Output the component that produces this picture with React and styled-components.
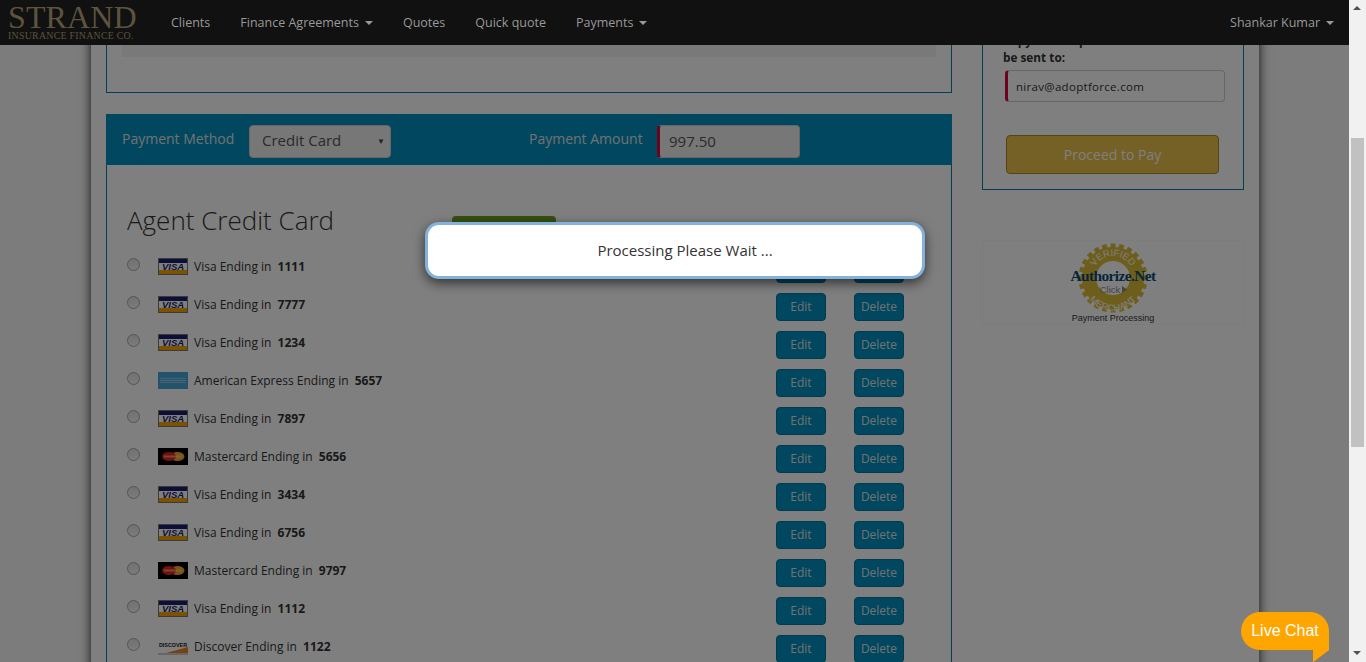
import styled, { createGlobalStyle } from 'styled-components'

const GlobalStyle = createGlobalStyle`
    html, body {
        margin: 0;
        height: 100%;
        overflow: hidden;
        background: #f8f8f8;
    }
    * {
        box-sizing: border-box;
    }
`

const cards = [
    { type: 'visa', name: 'Visa', last: '1111' },
    { type: 'visa', name: 'Visa', last: '7777' },
    { type: 'visa', name: 'Visa', last: '1234' },
    { type: 'amex', name: 'American Express', last: '5657' },
    { type: 'visa', name: 'Visa', last: '7897' },
    { type: 'master', name: 'Mastercard', last: '5656' },
    { type: 'visa', name: 'Visa', last: '3434' },
    { type: 'visa', name: 'Visa', last: '6756' },
    { type: 'master', name: 'Mastercard', last: '9797' },
    { type: 'visa', name: 'Visa', last: '1112' },
    { type: 'discover', name: 'Discover', last: '1122' },
]

const Caret = styled.span`
    display: inline-block;
    width: 0;
    height: 0;
    margin-left: 6px;
    vertical-align: middle;
    border-top: 4px solid currentColor;
    border-left: 4px solid transparent;
    border-right: 4px solid transparent;
`

const CardIcon = ({ type }) => {
    if (type === 'visa') {
        return (
            <svg width="30" height="17" viewBox="0 0 30 17">
                <rect width="30" height="17" fill="#fff" />
                <rect width="30" height="5" fill="#1a1f71" />
                <rect y="12" width="30" height="5" fill="#f7a600" />
                <rect x=".5" y=".5" width="29" height="16" fill="none" stroke="#777" />
                <text x="15" y="12" textAnchor="middle" fontFamily="Liberation Sans, sans-serif" fontSize="9.5" fontWeight="700" fontStyle="italic" fill="#1a1f71">VISA</text>
            </svg>
        )
    }
    if (type === 'amex') {
        return (
            <svg width="30" height="17" viewBox="0 0 30 17">
                <rect width="30" height="17" fill="#46a4d6" />
                <rect x="2" y="6" width="26" height="1" fill="#8cc6e6" />
                <rect x="2" y="8" width="26" height="1" fill="#9dd0ec" />
                <rect x="2" y="10" width="26" height="1" fill="#8cc6e6" />
            </svg>
        )
    }
    if (type === 'master') {
        return (
            <svg width="30" height="17" viewBox="0 0 30 17">
                <rect width="30" height="17" fill="#000" />
                <ellipse cx="19.5" cy="8.5" rx="7" ry="4.5" fill="#f9a533" />
                <ellipse cx="11" cy="8.5" rx="7" ry="4.5" fill="#e2231a" />
                <rect x="6" y="7.5" width="18" height="2" fill="#f4d8a0" opacity=".6" />
            </svg>
        )
    }
    return (
        <svg width="30" height="17" viewBox="0 0 30 17">
            <rect width="30" height="17" fill="#fff" />
            <path d="M8 15 L30 9 V15 Z" fill="#f58220" />
            <rect y="15" width="30" height="2" fill="#ccc" />
            <text x="15" y="8.5" textAnchor="middle" fontFamily="Liberation Sans, sans-serif" fontSize="5.4" fontWeight="700" fill="#222">DISCOVER</text>
        </svg>
    )
}

const Seal = () => {
    const teeth = []
    for (let i = 0; i < 24; i++) {
        teeth.push(<rect key={i} x="-2.5" y="-34.5" width="5" height="6" fill="#dcbc38" transform={`rotate(${i * 15})`} />)
    }
    return (
        <svg width="90" height="72" viewBox="-45 -36 90 72">
            <defs>
                <path id="sealTop" d="M-21 -1 A21 21 0 0 1 21 -1" />
                <path id="sealBottom" d="M-30 3 A30 30 0 0 0 30 3" />
            </defs>
            {teeth}
            <circle r="31" fill="#dcbc38" />
            <circle r="17" fill="#fff" />
            <text fontFamily="Liberation Sans, sans-serif" fontSize="9.5" fill="#fff">
                <textPath href="#sealTop" startOffset="50%" textAnchor="middle">VERIFIED</textPath>
            </text>
            <text fontFamily="Liberation Sans, sans-serif" fontSize="9.5" fill="#fff">
                <textPath href="#sealBottom" startOffset="50%" textAnchor="middle">MERCHANT</textPath>
            </text>
            <text x="0" y="3" textAnchor="middle" fontFamily="Liberation Serif, serif" fontSize="15.4" fontWeight="700" letterSpacing="-.6" fill="#0c4a73">Authorize.Net</text>
            <text x="-3" y="15" textAnchor="middle" fontFamily="Liberation Sans, sans-serif" fontSize="9.5" fill="#888">Click</text>
            <path d="M9 8 L14 11.5 L9 15 Z" fill="#888" />
        </svg>
    )
}

const App = () => {
    return (
        <Screen>
            <GlobalStyle />
            <Main>
                <Navbar>
                    <Brand>
                        <BrandName>STRAND</BrandName>
                        <BrandSub>INSURANCE FINANCE CO.</BrandSub>
                    </Brand>
                    <NavItem>Clients</NavItem>
                    <NavItem>Finance Agreements<Caret /></NavItem>
                    <NavItem>Quotes</NavItem>
                    <NavItem>Quick quote</NavItem>
                    <NavItem>Payments<Caret /></NavItem>
                    <NavUser>Shankar Kumar<Caret /></NavUser>
                </Navbar>
                <Stage>
                    <Sheet>
                        <LeftColumn>
                            <TopPanel>
                                <GrayBox />
                            </TopPanel>
                            <PaymentBar>
                                <BarLabel>Payment Method</BarLabel>
                                <MethodSelect>
                                    Credit Card
                                    <SelectArrow>▼</SelectArrow>
                                </MethodSelect>
                                <AmountLabel>Payment Amount</AmountLabel>
                                <AmountInput>997.50</AmountInput>
                            </PaymentBar>
                            <CardPanel>
                                <TitleRow>
                                    <Title>Agent Credit Card</Title>
                                    <AddButton />
                                </TitleRow>
                                {cards.map(card => (
                                    <CardRow key={card.last}>
                                        <Radio />
                                        <CardIcon type={card.type} />
                                        <CardText>
                                            {card.name} Ending in <b>{card.last}</b>
                                        </CardText>
                                        <RowButton>Edit</RowButton>
                                        <RowButton>Delete</RowButton>
                                    </CardRow>
                                ))}
                            </CardPanel>
                        </LeftColumn>
                        <RightColumn>
                            <SidePanel>
                                <SideLabel>Copy of receipt will<br />be sent to:</SideLabel>
                                <EmailInput>nirav@adoptforce.com</EmailInput>
                                <PayButton>Proceed to Pay</PayButton>
                            </SidePanel>
                            <SealBox>
                                <Seal />
                                <SealCaption>Payment Processing</SealCaption>
                            </SealBox>
                        </RightColumn>
                    </Sheet>
                    <Overlay />
                    <Popup>Processing Please Wait ...</Popup>
                </Stage>
                <LiveChat>Live Chat</LiveChat>
            </Main>
            <ScrollBar>
                <ScrollArrow />
                <ScrollTrack>
                    <ScrollThumb />
                </ScrollTrack>
                <ScrollArrow $down />
            </ScrollBar>
        </Screen>
    )
}

const Screen = styled.div`
    display: flex;
    height: 662px;
    font-family: "Open Sans", sans-serif;
    color: #333;
`
const Main = styled.div`
    position: relative;
    flex: 1;
    display: flex;
    flex-direction: column;
    min-width: 0;
    overflow: hidden;
`
const Navbar = styled.div`
    display: flex;
    align-items: center;
    height: 45px;
    flex: none;
    padding-right: 15px;
    padding-bottom: 1px;
    background: #111;
    color: #999;
    font-size: 12.5px;
`
const Brand = styled.div`
    width: 156px;
    padding-left: 8px;
    color: #5d533f;
    font-family: "Liberation Serif", serif;
    line-height: 1;
`
const BrandName = styled.div`
    font-size: 32px;
    height: 30px;
    margin-top: -2px;
    letter-spacing: .1px;
`
const BrandSub = styled.div`
    font-size: 9.9px;
    letter-spacing: .25px;
    white-space: nowrap;
`
const NavItem = styled.div`
    padding: 0 15px;
    white-space: nowrap;
`
const NavUser = styled(NavItem)`
    margin-left: auto;
    padding: 0;
`
const Stage = styled.div`
    position: relative;
    flex: 1;
    overflow: hidden;
`
const Sheet = styled.div`
    display: flex;
    align-items: flex-start;
    gap: 30px;
    width: 1168px;
    height: 800px;
    margin: -40px 0 0 91px;
    padding: 0 15px;
    background: #fff;
    box-shadow: 0 0 10px rgba(0, 0, 0, .85);
`
const LeftColumn = styled.div`
    width: 846px;
    flex: none;
`
const TopPanel = styled.div`
    height: 88px;
    padding: 0 15px;
    border: 1px solid #007fa8;
    border-top: 0;
    margin-bottom: 21px;
`
const GrayBox = styled.div`
    height: 52px;
    background: #f2f2f2;
`
const PaymentBar = styled.div`
    display: flex;
    align-items: center;
    height: 51px;
    padding-left: 16px;
    background: #008fbe;
    color: #e2e2e2;
    font-size: 14px;
`
const BarLabel = styled.div`
    width: 127px;
    margin-top: -3px;
`
const MethodSelect = styled.div`
    position: relative;
    width: 142px;
    height: 33px;
    line-height: 29px;
    padding-left: 12px;
    margin-top: 4px;
    background: #eee;
    border: 1px solid #ccc;
    border-radius: 4px;
    color: #555;
    font-size: 15px;
`
const SelectArrow = styled.span`
    position: absolute;
    right: 5px;
    top: 0;
    font-size: 8px;
    color: #444;
`
const AmountLabel = styled.div`
    width: 128px;
    margin: -3px 0 0 138px;
`
const AmountInput = styled.div`
    width: 143px;
    height: 33px;
    line-height: 31px;
    padding-left: 9px;
    margin-top: 4px;
    background: #eee;
    border: 1px solid #ccc;
    border-left: 3px solid #d9043d;
    border-radius: 4px;
    color: #555;
    font-size: 15px;
`
const CardPanel = styled.div`
    padding: 38px 47px 0 20px;
    height: 600px;
    border: 1px solid #007fa8;
    border-top: 0;
`
const TitleRow = styled.div`
    display: flex;
    align-items: flex-start;
    height: 47px;
`
const Title = styled.h3`
    width: 325px;
    margin: 0;
    font-size: 26px;
    font-weight: 300;
    line-height: 34px;
`
const AddButton = styled.div`
    width: 104px;
    height: 34px;
    margin-top: 13px;
    background: #6f9f20;
    border-radius: 4px;
`
const CardRow = styled.div`
    display: flex;
    align-items: center;
    height: 38px;
    font-size: 12px;
    svg {
        flex: none;
        margin-bottom: 6px;
    }
`
const Radio = styled.span`
    width: 13px;
    height: 13px;
    margin: -9px 18px 0 0;
    border-radius: 50%;
    background: linear-gradient(#e4e4e4, #f6f6f6);
    border: 1px solid #a8a8a8;
`
const CardText = styled.div`
    flex: 1;
    margin: 0 0 6px 6px;
    white-space: pre;
    b {
        font-weight: 700;
        margin-left: 3px;
    }
`
const RowButton = styled.div`
    width: 50px;
    height: 28px;
    margin-left: 28px;
    text-align: center;
    line-height: 26px;
    background: #008fbe;
    border: 1px solid #00789f;
    border-radius: 4px;
    color: #e2e2e2;
    font-size: 12px;
    &:first-of-type {
        margin-left: 0;
    }
`
const RightColumn = styled.div`
    width: 262px;
    flex: none;
    display: flex;
    flex-direction: column;
`
const SidePanel = styled.div`
    height: 185px;
    padding: 27px 18px 0 20px;
    border: 1px solid #007fa8;
    border-top: 0;
    margin-bottom: 50px;
`
const SideLabel = styled.div`
    height: 38px;
    font-size: 11.8px;
    font-weight: 700;
    line-height: 17px;
`
const EmailInput = styled.div`
    height: 32px;
    margin-left: 2px;
    line-height: 32px;
    padding-left: 8px;
    border: 1px solid #ccc;
    border-left: 3px solid #d9043d;
    border-radius: 4px;
    font-size: 11.5px;
    letter-spacing: .3px;
`
const PayButton = styled.div`
    width: 213px;
    height: 39px;
    margin: 33px 0 0 3px;
    line-height: 38px;
    text-align: center;
    background: #eac24c;
    border: 1px solid #a8882c;
    border-radius: 4px;
    color: #fff;
    font-size: 14px;
`
const SealBox = styled.div`
    display: flex;
    flex-direction: column;
    align-items: center;
    height: 85px;
    padding-top: 1px;
    border: 1px solid #f8f8f8;
`
const SealCaption = styled.div`
    margin-top: -1px;
    font-family: "Liberation Sans", sans-serif;
    font-size: 9px;
    line-height: 10px;
`
const Overlay = styled.div`
    position: absolute;
    inset: 0;
    background: rgba(0, 0, 0, .5);
`
const Popup = styled.div`
    position: absolute;
    top: 177px;
    left: 425px;
    width: 500px;
    height: 57px;
    padding-left: 20px;
    line-height: 50px;
    text-align: center;
    background: #fff;
    border: 3px solid #85b2dc;
    border-radius: 14px;
    box-shadow: 0 4px 12px rgba(0, 0, 0, .6);
    font-size: 15px;
`
const LiveChat = styled.div`
    position: absolute;
    top: 612px;
    left: 1241px;
    width: 88px;
    height: 38px;
    line-height: 37px;
    text-align: center;
    background: #ffa500;
    border-radius: 19px 19px 0 19px;
    color: #fff;
    font-family: "Liberation Sans", sans-serif;
    font-size: 16px;
    &::after {
        content: '';
        position: absolute;
        top: 38px;
        right: 0;
        border-top: 12px solid #ffa500;
        border-left: 16px solid #ffa500;
        clip-path: polygon(0 0, 100% 0, 0 100%);
    }
`
const ScrollBar = styled.div`
    width: 17px;
    flex: none;
    display: flex;
    flex-direction: column;
    background: #f1f1f1;
`
const ScrollArrow = styled.div`
    position: relative;
    height: 17px;
    flex: none;
    &::after {
        content: '';
        position: absolute;
        left: 4px;
        top: 6px;
        border-left: 4px solid transparent;
        border-right: 4px solid transparent;
        ${props => props.$down ? 'border-top: 4px solid #505050;' : 'border-bottom: 4px solid #505050;'}
    }
`
const ScrollTrack = styled.div`
    flex: 1;
    padding: 121px 2px 0;
`
const ScrollThumb = styled.div`
    height: 309px;
    background: #c1c1c1;
`

export default App
